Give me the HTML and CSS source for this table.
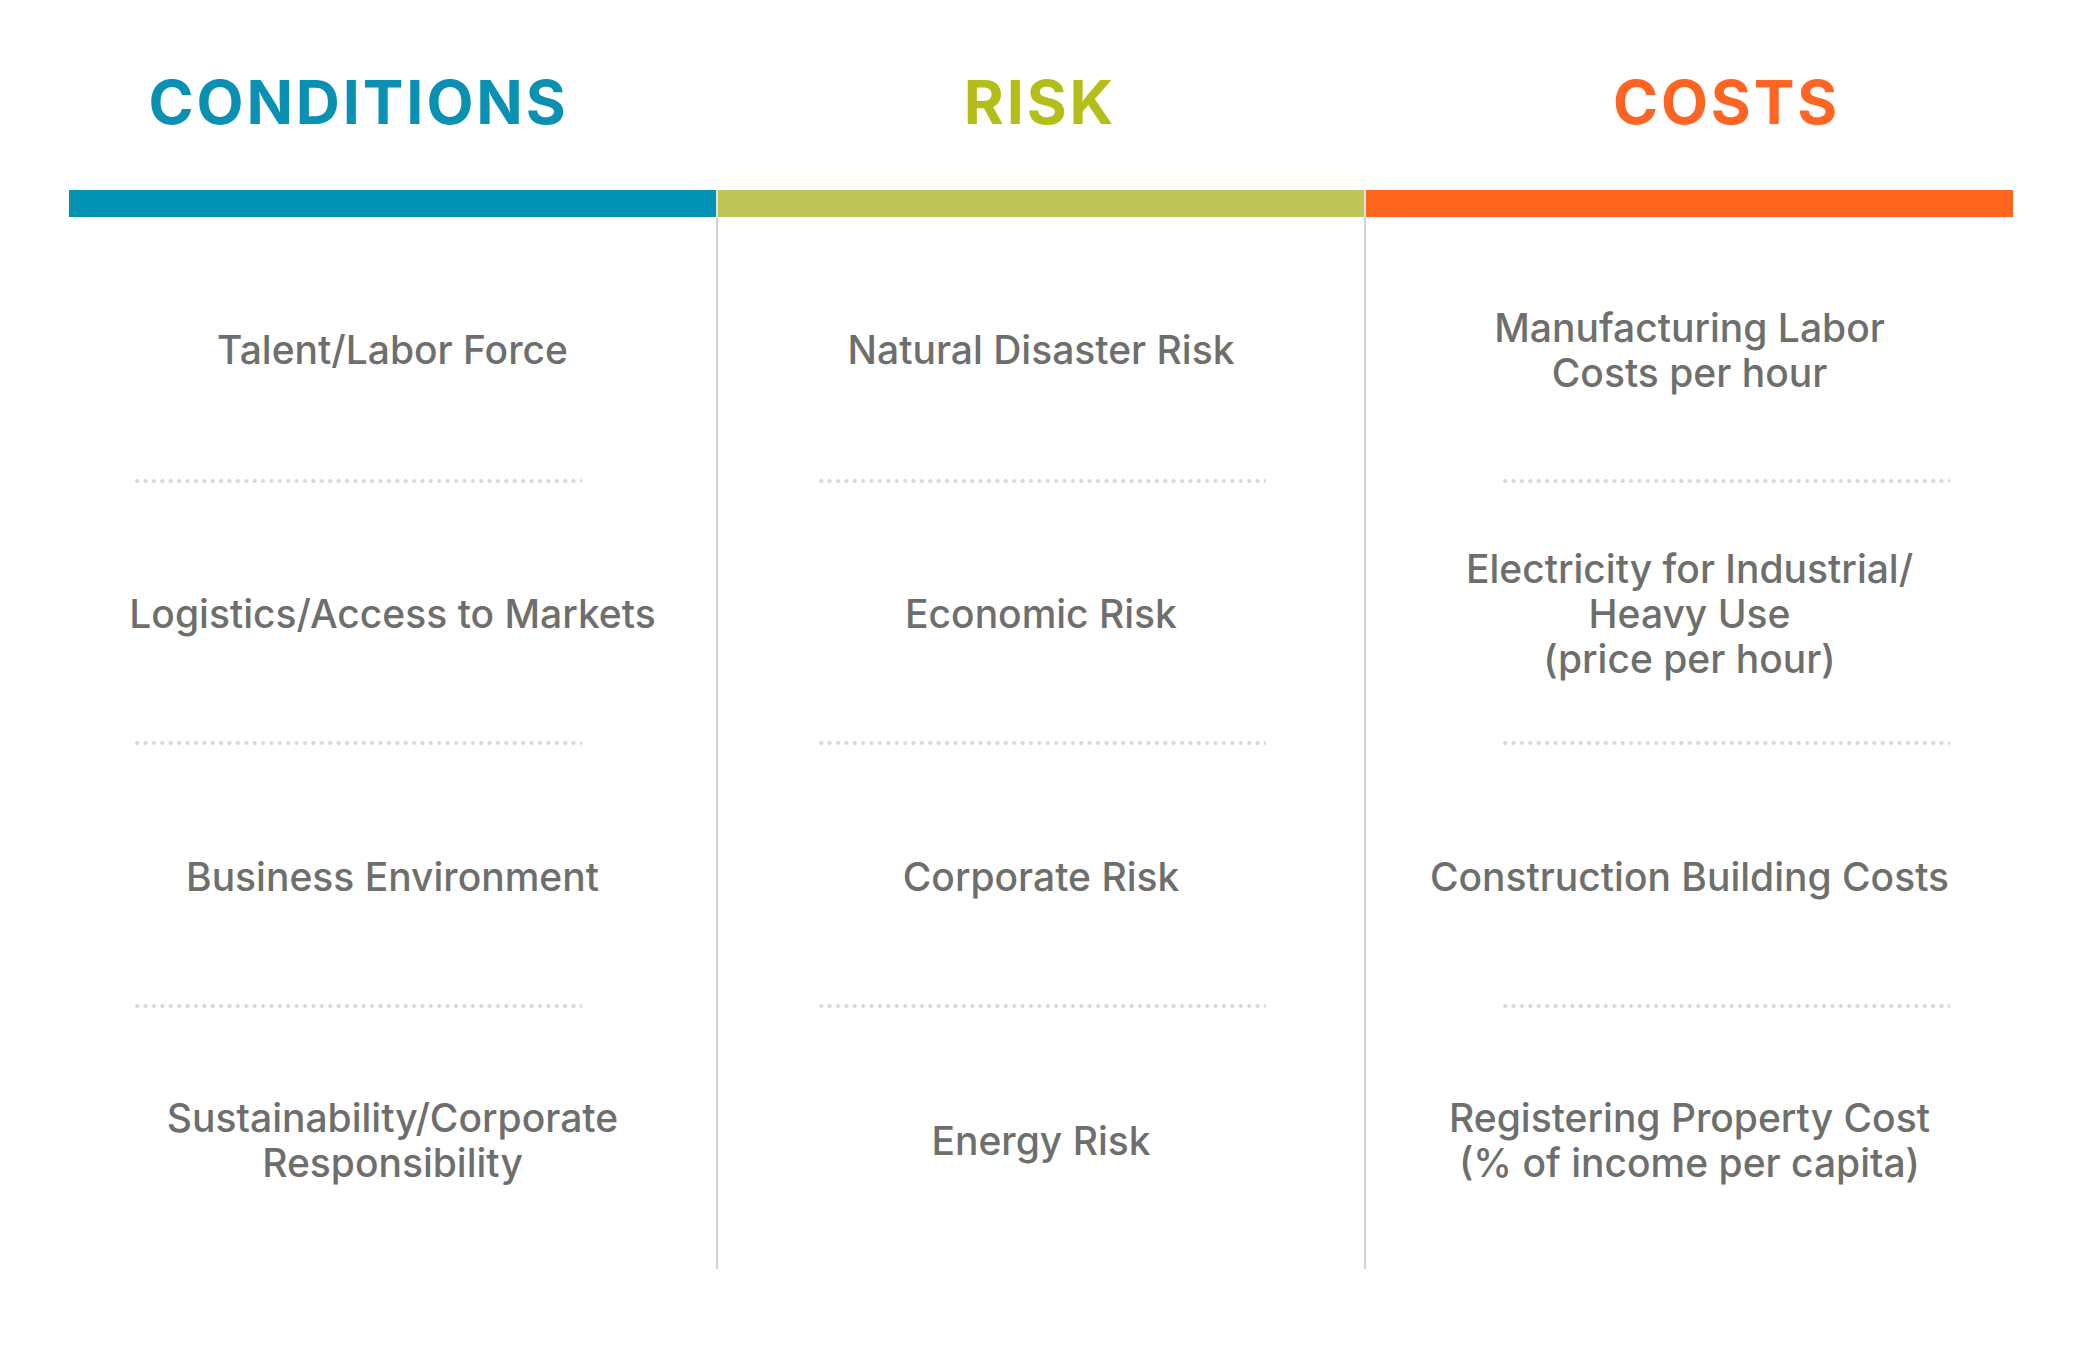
FILE: index.html
```html
<!DOCTYPE html>
<html lang="en">
<head>
<meta charset="utf-8">
<title>Conditions, Risk, Costs</title>
<link rel="stylesheet" href="styles.css">
</head>
<body>
<div class="board">
  <section class="col col--conditions">
    <h2 class="heading">CONDITIONS</h2>
    <div class="bar"></div>
    <div class="cells">
      <div class="cell cell--1">Talent/Labor Force</div>
      <div class="sep"></div>
      <div class="cell cell--2">Logistics/Access to Markets</div>
      <div class="sep"></div>
      <div class="cell cell--3">Business Environment</div>
      <div class="sep"></div>
      <div class="cell cell--4">Sustainability/Corporate<br>Responsibility</div>
    </div>
  </section>
  <section class="col col--risk">
    <h2 class="heading">RISK</h2>
    <div class="bar"></div>
    <div class="cells">
      <div class="cell cell--1">Natural Disaster Risk</div>
      <div class="sep"></div>
      <div class="cell cell--2">Economic Risk</div>
      <div class="sep"></div>
      <div class="cell cell--3">Corporate Risk</div>
      <div class="sep"></div>
      <div class="cell cell--4">Energy Risk</div>
    </div>
  </section>
  <section class="col col--costs">
    <h2 class="heading">COSTS</h2>
    <div class="bar"></div>
    <div class="cells">
      <div class="cell cell--1">Manufacturing Labor<br>Costs per hour</div>
      <div class="sep"></div>
      <div class="cell cell--2">Electricity for Industrial/<br>Heavy Use<br>(price per hour)</div>
      <div class="sep"></div>
      <div class="cell cell--3">Construction Building Costs</div>
      <div class="sep"></div>
      <div class="cell cell--4">Registering Property Cost<br>(% of income per capita)</div>
    </div>
  </section>
</div>
</body>
</html>
```

FILE: styles.css
```css
html, body {
  margin: 0;
  padding: 0;
  background: #ffffff;
}

body {
  font-family: "Inter", "Lato", "Liberation Sans", sans-serif;
  width: 2083px;
  height: 1354px;
  overflow: hidden;
}

.board {
  display: grid;
  grid-template-columns: 647px 648px 649px;
  margin-left: 69px;
}

.col {
  display: flex;
  flex-direction: column;
}

.heading {
  margin: 0;
  height: 190px;
  box-sizing: border-box;
  padding-top: 72px;
  font-size: 61px;
  line-height: 1;
  font-weight: 700;
  text-align: center;
  letter-spacing: 2.9px;
}

.col--conditions .heading {
  color: #0a90b3;
  padding-right: 68px;
}

.col--risk .heading {
  color: #b4be18;
}

.col--costs .heading {
  color: #ff6522;
  padding-left: 76px;
}

.bar {
  height: 27px;
}

.col--conditions .bar { background: #0292b4; }
.col--risk .bar { background: #bfc659; }
.col--costs .bar { background: #fe6620; }

.col--risk .bar,
.col--costs .bar {
  border-left: 2px solid #e3e3e3;
}

.cells {
  display: flex;
  flex-direction: column;
  height: 1052px;
}

.col--risk .cells,
.col--costs .cells {
  border-left: 2px solid #d2d2d2;
}

.cell {
  display: flex;
  align-items: center;
  justify-content: center;
  text-align: center;
  color: #6e6f6d;
  font-size: 39px;
  font-weight: 500;
  line-height: 45px;
  padding-top: 3px;
  box-sizing: border-box;
}

.cell--1 { height: 262px; }
.cell--2 { height: 258px; }
.cell--3 { height: 259px; }
.cell--4 { height: 261px; }

.sep {
  height: 4px;
  width: 449px;
  background-image: radial-gradient(circle, #d8d8d8 1.7px, rgba(216, 216, 216, 0) 2.3px);
  background-size: 8.4px 4px;
  background-repeat: repeat-x;
}

.col--conditions .sep { margin-left: 64px; }
.col--risk .sep { margin-left: 99px; }
.col--costs .sep { margin-left: 135px; }
```
